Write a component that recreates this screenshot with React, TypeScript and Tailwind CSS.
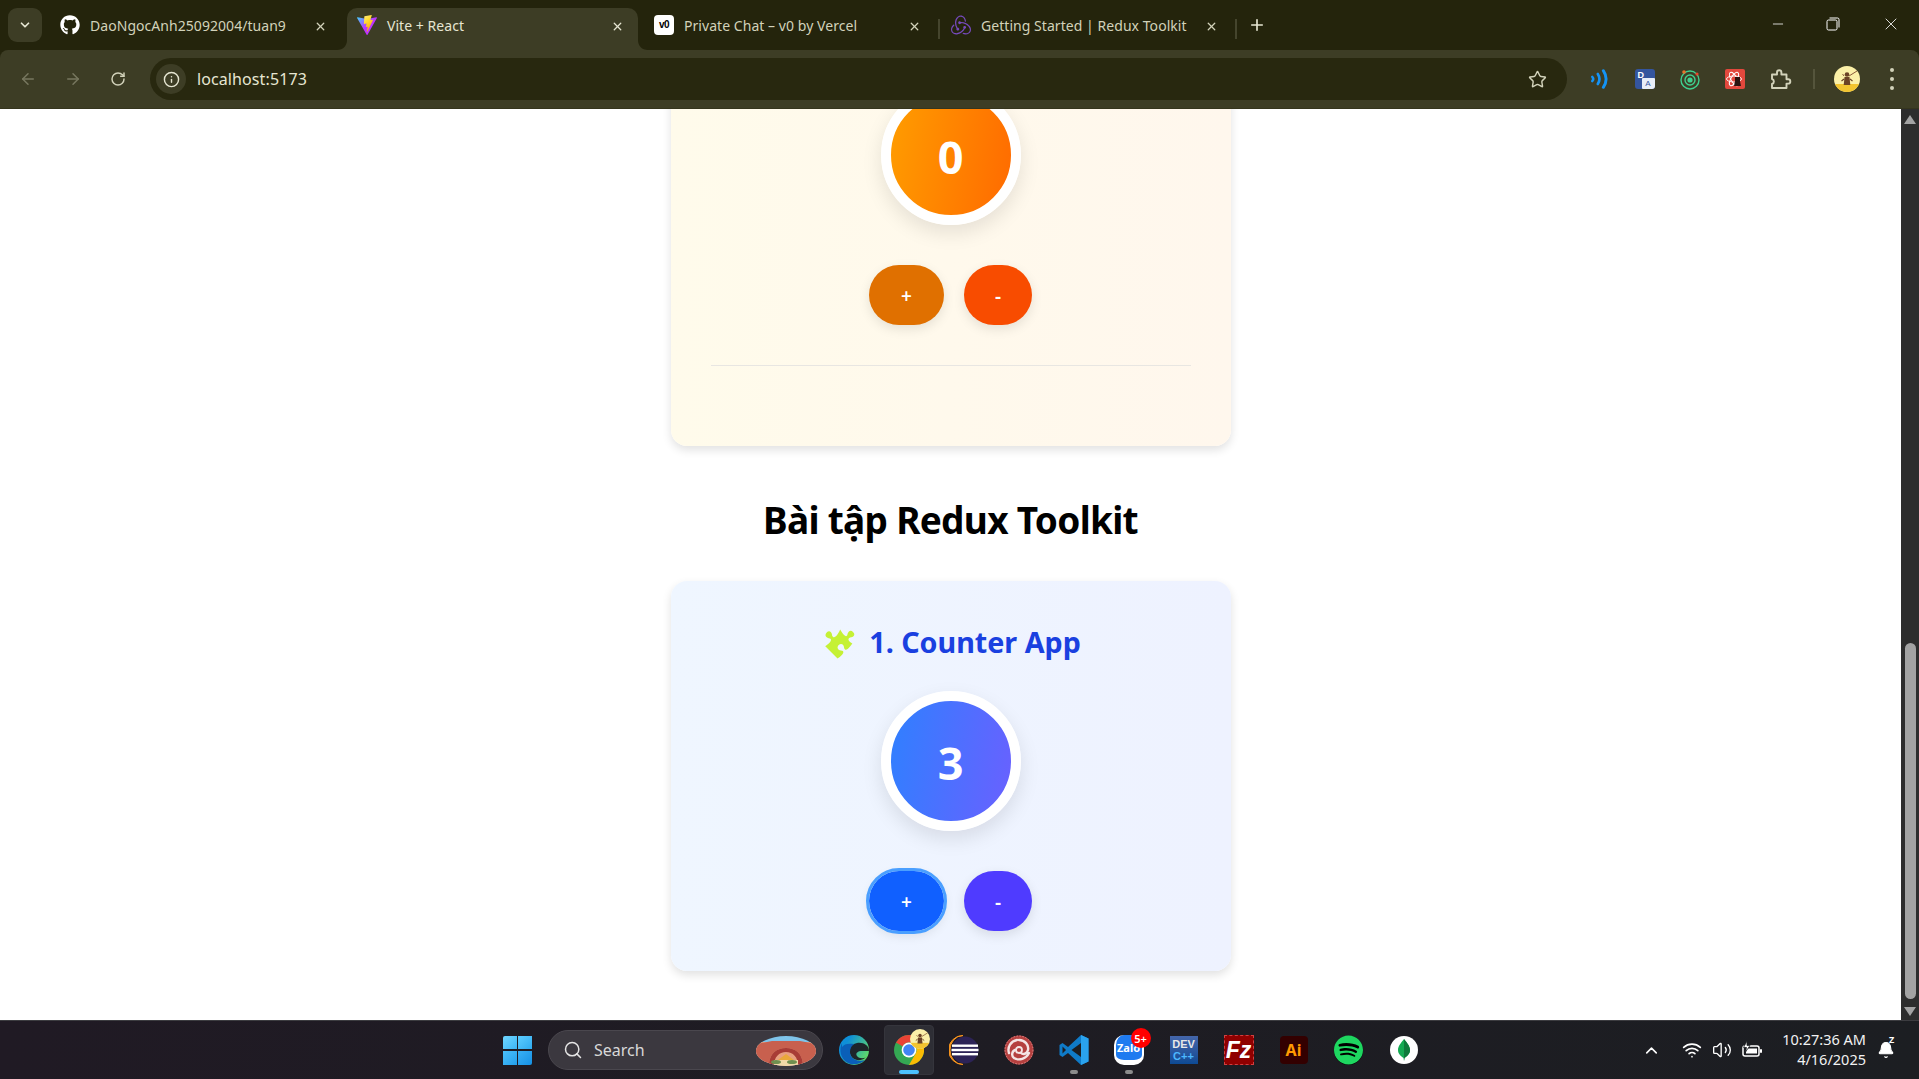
import React from "react";
import { FaGithub, FaPuzzlePiece, FaSpotify } from "react-icons/fa";
import { SiRedux } from "react-icons/si";
import { ArrowLeft, ArrowRight, RotateCw, Info, Star, X, Minus, Plus, ChevronDown, Search, ChevronUp, Wifi, Volume2, Bell } from "lucide-react";

const ui = "font-['Noto_Sans','Open_Sans',sans-serif]";

function ViteIcon() {
  return (
    <svg width="20" height="20" viewBox="0 0 256 257">
      <defs>
        <linearGradient id="va" x1="0" y1="0" x2="1" y2="1"><stop offset="0" stopColor="#41d1ff" /><stop offset="0.5" stopColor="#bd34fe" /></linearGradient>
        <linearGradient id="vb" x1="0" y1="0" x2="0.5" y2="1"><stop offset="0" stopColor="#ffea83" /><stop offset="0.4" stopColor="#ffdd35" /><stop offset="1" stopColor="#ffa800" /></linearGradient>
      </defs>
      <path fill="url(#va)" d="M255.153 37.938 134.897 252.976c-2.483 4.44-8.862 4.466-11.382.048L.875 37.958c-2.746-4.814 1.371-10.646 6.827-9.67l120.385 21.517a6.537 6.537 0 0 0 2.322-.004l117.867-21.483c5.438-.991 9.574 4.796 6.877 9.62Z" />
      <path fill="url(#vb)" d="M185.432.063 96.44 17.501a3.268 3.268 0 0 0-2.634 3.014l-5.474 92.456a3.268 3.268 0 0 0 3.997 3.378l24.777-5.718c2.318-.535 4.413 1.507 3.936 3.838l-7.361 36.047c-.495 2.426 1.782 4.5 4.151 3.78l15.304-4.649c2.372-.72 4.652 1.36 4.15 3.788l-11.698 56.621c-.732 3.542 3.979 5.473 5.943 2.437l1.313-2.028 72.516-144.72c1.215-2.423-.88-5.186-3.54-4.672l-25.505 4.922c-2.396.462-4.435-1.77-3.759-4.114l16.646-57.705c.677-2.35-1.37-4.583-3.769-4.113Z" />
    </svg>
  );
}

function V0Icon() {
  return (
    <div className="w-5 h-5 rounded-[4px] bg-white flex items-center justify-center">
      <span className="text-[10px] leading-none font-black text-black font-['Liberation_Sans',sans-serif] tracking-[-0.5px]">v0</span>
    </div>
  );
}

function Tab({ icon, title, active, divider }: { icon: React.ReactNode; title: string; active?: boolean; divider?: boolean }) {
  return (
    <div className="relative w-[297px] h-[42px] flex items-center shrink-0">
      {active && (
        <>
          <div className="absolute left-0 top-0 bottom-0 right-[6px] bg-[#3d3d25] rounded-t-[10px]" />
          <svg className="absolute left-[-10px] bottom-0" width="10" height="10"><path d="M10 0V10H0C6 10 10 6 10 0Z" fill="#3d3d25" /></svg>
          <svg className="absolute right-[-4px] bottom-0" width="10" height="10"><path d="M0 0V10H10C4 10 0 6 0 0Z" fill="#3d3d25" /></svg>
        </>
      )}
      <div className="relative flex items-center h-full pl-[10px] -top-[4px]">
        <div className="w-5 h-5 flex items-center justify-center relative top-[3px] -mt-[6px]">{icon}</div>
        <span className={`ml-[10px] text-[14px] tracking-[0.05px] whitespace-nowrap ${active ? "text-[#e6e6d2]" : "text-[#d2d2ba]"}`}>{title}</span>
      </div>
      <X className={`absolute left-[264px] top-[12px] ${active ? "text-[#e6e6d2]" : "text-[#d2d2ba]"}`} size={13} strokeWidth={2.4} />
      {divider && <div className="absolute left-[294px] top-[11px] w-[1.5px] h-5 bg-[#45452d]" />}
    </div>
  );
}

function TitleBar() {
  return (
    <div className="h-[50px] bg-[#24240c] flex items-end shrink-0 relative">
      <div className="w-[34px] h-[34px] ml-2 mb-2 rounded-[9px] bg-[#3d3d25] flex items-center justify-center shrink-0">
        <ChevronDown size={14} strokeWidth={3} className="text-[#e6e6d2]" />
      </div>
      <div className="ml-2 flex items-end">
        <Tab icon={<FaGithub size={20} className="text-white" />} title="DaoNgocAnh25092004/tuan9" />
        <Tab active icon={<ViteIcon />} title="Vite + React" />
        <Tab divider icon={<V0Icon />} title="Private Chat – v0 by Vercel" />
        <Tab divider icon={<SiRedux size={20} className="text-[#764abc]" />} title="Getting Started | Redux Toolkit" />
      </div>
      <Plus size={18} strokeWidth={2.2} className="text-[#e6e6d2] ml-[10px] mb-[16px]" />
      <div className="ml-auto flex h-full items-center text-white pr-px pb-[2px]">
        <div className="w-[55px] flex justify-center"><Minus size={16} strokeWidth={1.2} /></div>
        <div className="w-[55px] flex justify-center">
          <svg width="14" height="14" viewBox="0 0 14 14" fill="none" stroke="currentColor" strokeWidth="1"><rect x="1" y="3" width="10" height="10" rx="1.5" /><path d="M3.5 1H11.5A1.5 1.5 0 0 1 13 2.5V10.5" /></svg>
        </div>
        <div className="w-[55px] flex justify-center ml-[3px]"><X size={20} strokeWidth={1} /></div>
      </div>
    </div>
  );
}

function ExtSlot({ children }: { children: React.ReactNode }) {
  return <div className="w-[45px] flex items-center justify-center">{children}</div>;
}

function Avatar({ size, id }: { size: number; id: string }) {
  return (
    <svg width={size} height={size} viewBox="0 0 26 26">
      <defs><clipPath id={id}><circle cx="13" cy="13" r="13" /></clipPath></defs>
      <g clipPath={`url(#${id})`}>
        <rect width="26" height="26" fill="#fbf0a8" />
        <rect y="18" width="26" height="8" fill="#f2c430" />
        <path d="M10.5 11h5l.8 8h-6.6Z" fill="#6b4226" />
        <circle cx="13" cy="8.5" r="2.3" fill="#6b4226" />
        <path d="M8.5 8l1.5 2M15 10l8-5" stroke="#8a5a3a" strokeWidth="1" />
        <path d="M10 13l-2.5 2M16 13l2.5 2" stroke="#6b4226" strokeWidth="1.2" />
      </g>
    </svg>
  );
}

function Toolbar() {
  return (
    <div className="h-[59px] bg-[#24240c] shrink-0">
      <div className="h-full bg-[#3d3d25] rounded-t-[8px] flex items-center pl-[5px] border-b border-[#35351d]">
        <div className="w-[45px] flex justify-center"><ArrowLeft size={18} className="text-[#77775f]" /></div>
        <div className="w-[45px] flex justify-center"><ArrowRight size={18} className="text-[#77775f]" /></div>
        <div className="w-[45px] flex justify-center"><RotateCw size={16} strokeWidth={2.2} className="text-[#d2d2ba]" /></div>
        <div className="ml-[10px] flex-1 h-[42px] rounded-full bg-[#28280f] flex items-center pl-[6px] pr-[20px]">
          <div className="w-[30px] h-[30px] rounded-full bg-[#3d3d25] flex items-center justify-center">
            <Info size={17} className="text-[#e6e6d2]" />
          </div>
          <span className="ml-[11px] text-[16px] tracking-[0.1px] text-[#e6e6d2]">localhost:5173</span>
          <Star size={19} strokeWidth={1.8} className="ml-auto text-[#d2d2ba]" />
        </div>
        <div className="ml-[10px] flex items-center w-[342px] shrink-0">
          <ExtSlot>
            <svg width="20" height="20" viewBox="0 0 18 18" fill="none" stroke="#1493f5" strokeLinecap="round"><path d="M2 7Q4 9 2 11" strokeWidth="2.2" /><path d="M7 4.5Q10 9 7 13.5" strokeWidth="2.4" /><path d="M12 1.5Q17 9 12 16.5" strokeWidth="2.6" /></svg>
          </ExtSlot>
          <ExtSlot>
            <div className="relative w-5 h-5 rounded-[3px] bg-[#34559e] overflow-hidden">
              <span className="absolute left-[3px] top-[1px] text-[9px] font-bold text-white leading-[11px] font-['Liberation_Sans',sans-serif]">D</span>
              <div className="absolute right-0 bottom-0 w-[13px] h-[11px] bg-[#e8eef8] rounded-[1px] flex items-center justify-center">
                <span className="text-[8px] text-[#34559e] leading-none font-['Liberation_Sans',sans-serif]">A</span>
              </div>
            </div>
          </ExtSlot>
          <ExtSlot>
            <svg width="22" height="22" viewBox="0 0 22 22" fill="none"><circle cx="11" cy="12" r="9" stroke="#3fd08f" strokeWidth="1.4" /><circle cx="11" cy="12" r="5" stroke="#3fd08f" strokeWidth="1.4" /><circle cx="11" cy="12" r="2.6" fill="#3fd08f" /><circle cx="5" cy="4" r="1.8" fill="#e8702a" /><circle cx="18" cy="6" r="1.6" fill="#e8452a" /></svg>
          </ExtSlot>
          <ExtSlot>
            <svg width="20" height="20" viewBox="0 0 20 20" fill="none"><rect width="20" height="20" rx="2" fill="#e2483d" /><g stroke="#fff" strokeWidth="0.9"><ellipse cx="9" cy="10" rx="7.5" ry="3" /><ellipse cx="9" cy="10" rx="7.5" ry="3" transform="rotate(60 9 10)" /><ellipse cx="9" cy="10" rx="7.5" ry="3" transform="rotate(120 9 10)" /></g><path d="M10 8h5v4l1 5h-7l1-5Z" fill="#2a1410" /></svg>
          </ExtSlot>
          <ExtSlot>
            <svg className="relative left-px" width="22" height="22" viewBox="0 0 22 22" fill="none" stroke="#d2d2ba" strokeWidth="1.9" strokeLinejoin="round"><path d="M2 6.5h5V4.5a2.2 2.2 0 0 1 4.4 0v2h5.1v4.7h1.6a2.2 2.2 0 0 1 0 4.4h-1.6V20H2v-4a2.6 2.6 0 0 0 0-5Z" /></svg>
          </ExtSlot>
          <div className="ml-[11px] w-[2px] h-5 bg-[#55553c]" />
          <div className="ml-[19px]"><Avatar size={26} id="av1" /></div>
          <div className="ml-[30px] flex flex-col gap-[5px]">
            <div className="w-[4px] h-[4px] rounded-full bg-[#d2d2ba]" />
            <div className="w-[4px] h-[4px] rounded-full bg-[#d2d2ba]" />
            <div className="w-[4px] h-[4px] rounded-full bg-[#d2d2ba]" />
          </div>
        </div>
      </div>
    </div>
  );
}

function Counter({ value, ring, plus, minus, ringFocus }: { value: number; ring: string; plus: string; minus: string; ringFocus?: boolean }) {
  return (
    <>
      <div className={`w-[140px] h-[140px] rounded-full border-[10px] border-white shadow-[0_8px_20px_rgba(0,0,0,0.1)] flex items-center justify-center text-white text-[45px] font-bold leading-none ${ui} ${ring}`}>
        <span className="relative top-px">{value}</span>
      </div>
      <div className="mt-10 flex gap-5">
        <div className={`w-[75px] h-[60px] rounded-[30px] text-white text-[19px] font-semibold flex items-center justify-center shadow-[0_4px_12px_rgba(0,0,0,0.1)] ${plus} ${ringFocus ? "outline-[3px] outline-[#4a9fff]" : ""}`}><span className="relative top-px">+</span></div>
        <div className={`w-[68px] h-[60px] rounded-[30px] text-white text-[19px] font-semibold flex items-center justify-center shadow-[0_4px_12px_rgba(0,0,0,0.1)] ${minus}`}><span className="relative top-px">-</span></div>
      </div>
    </>
  );
}

function Page() {
  return (
    <div className="flex-1 min-h-0 flex overflow-hidden bg-white">
      <div className={`flex-1 flex flex-col items-center ${ui}`}>
        <div className="w-[560px] -mt-[134px] pt-[110px] px-10 pb-0 rounded-2xl shadow-[0_4px_10px_rgba(0,0,0,0.12)] flex flex-col items-center bg-linear-to-r from-[#fffbeb] to-[#fff7ed] shrink-0">
          <Counter value={0} ring="bg-linear-[100deg] from-[#ff9d00] to-[#ff6a00]" plus="bg-[#e07000]" minus="bg-[#f84c00]" />
          <div className="mt-10 mb-20 w-full h-px bg-[#e8e6e2]" />
        </div>
        <h2 className="mt-[52px] mb-[40px] text-[37px] leading-[43px] tracking-[-0.7px] font-bold text-black whitespace-nowrap">Bài tập Redux Toolkit</h2>
        <div className="w-[560px] pt-10 pb-10 px-10 rounded-2xl shadow-[0_4px_10px_rgba(0,0,0,0.12)] flex flex-col items-center bg-linear-to-r from-[#eff6ff] to-[#eef2ff] shrink-0">
          <div className="h-[44px] flex items-center gap-[15px] mb-[26px] relative left-[2px] -top-px">
            <FaPuzzlePiece size={30} className="text-[#c5f135] rotate-[-45deg] relative -top-[3px]" />
            <span className="text-[28.7px] leading-none font-bold text-[#1a40e0] whitespace-nowrap">1. Counter App</span>
          </div>
          <Counter value={3} ring="bg-linear-[100deg] from-[#2f80ff] to-[#6a60ff]" plus="bg-[#1060ff]" minus="bg-[#4f3bff]" ringFocus />
        </div>
      </div>
      <div className="w-[18px] bg-[#2d2d2d] flex flex-col items-center shrink-0 relative">
        <svg className="mt-[6px]" width="14" height="10" viewBox="0 0 14 10"><path d="M7 0L13 9H1Z" fill="#a3a3a3" /></svg>
        <div className="absolute top-[534px] left-[4px] w-[11px] h-[356px] rounded-full bg-[#a3a3a3]" />
        <svg className="mt-auto mb-[4px]" width="14" height="10" viewBox="0 0 14 10"><path d="M7 10L13 1H1Z" fill="#a3a3a3" /></svg>
      </div>
    </div>
  );
}

function Slot({ children, active, dot }: { children: React.ReactNode; active?: boolean; dot?: boolean }) {
  return (
    <div className="relative w-[55px] h-[50px] flex items-center justify-center shrink-0">
      {active && <div className="absolute left-[3px] right-[2px] top-0 bottom-0 rounded-[4px] bg-[#2e2e35] border border-[#35353c]" />}
      <div className="relative">{children}</div>
      {active && <div className="absolute bottom-[1px] left-[18px] w-5 h-1 rounded-full bg-[#4cc2ff]" />}
      {dot && <div className="absolute bottom-[1px] left-[24px] w-2 h-1 rounded-full bg-[#8c8c8c]" />}
    </div>
  );
}

function Taskbar() {
  return (
    <div className={`h-[59px] shrink-0 bg-linear-to-r from-[#201a24] to-[#1c1e22] border-t border-[#3c3c40] flex items-center relative ${ui}`}>
      <div className="ml-[503px] w-[29px] h-[29px] grid grid-cols-2 gap-[1.5px] shrink-0">
        <div className="bg-linear-to-br from-[#6fd6ff] to-[#3ab5f5] rounded-tl-[2px]" />
        <div className="bg-linear-to-br from-[#5ccdff] to-[#2eabf0]" />
        <div className="bg-linear-to-br from-[#4ac0fb] to-[#22a0ec]" />
        <div className="bg-linear-to-br from-[#38b0f5] to-[#1490e4] rounded-br-[2px]" />
      </div>
      <div className="ml-[16px] w-[275px] h-10 rounded-full bg-[#3b383f] border border-[#4a474e] flex items-center pl-[14px] shrink-0 relative">
        <Search size={20} strokeWidth={1.8} className="text-[#e4e4e4]" />
        <span className="ml-[11px] text-[16px] text-[#d8d8d8]">Search</span>
        <svg className="absolute right-[6px] top-[5px]" width="60" height="30" viewBox="0 0 60 30">
          <defs><clipPath id="sc"><ellipse cx="30" cy="15" rx="30" ry="15" /></clipPath></defs>
          <g clipPath="url(#sc)">
            <rect width="60" height="30" fill="#7fc4ea" />
            <rect y="6" width="60" height="24" fill="#e8a080" />
            <path d="M0 8L16 5 44 5 60 8V30H47C47 18 40 12 30 12S13 18 13 30H0Z" fill="#c8604e" />
            <path d="M13 30C13 18 20 12 30 12S47 18 47 30H42C42 21 37 16 30 16S18 21 18 30Z" fill="#a83c36" />
            <path d="M22 24L30 18 38 24Z" fill="#eaa83a" />
            <rect x="18" y="24" width="24" height="6" fill="#f0d8a8" />
            <ellipse cx="20" cy="26" rx="5" ry="2" fill="#6f8f50" />
            <ellipse cx="36" cy="26" rx="5" ry="2" fill="#6f8f50" />
          </g>
        </svg>
      </div>
      <div className="ml-[3px] flex items-center shrink-0">
        <Slot>
          <svg width="30" height="30" viewBox="0 0 30 30">
            <defs><linearGradient id="eg" x1="0" y1="0" x2="1" y2="0.6"><stop offset="0.3" stopColor="#0e8fd8" /><stop offset="1" stopColor="#5fd86a" /></linearGradient></defs>
            <circle cx="15" cy="15" r="15" fill="url(#eg)" />
            <path d="M30 16C30 10 24 7 18 8C11 9 9 16 12 21C15 26 22 27 29 21C26 24 20 24 18 21C16 18 19 16 23 16Z" fill="#1c1e24" opacity="0.95" />
            <path d="M3 8C0 14 1 24 9 28C13 30 21 30 26 25C21 27 14 25 12 21C10 17 11 12 15 9C9 8 5 9 3 12Z" fill="#0a5fb8" />
          </svg>
        </Slot>
        <Slot active>
          <svg width="30" height="30" viewBox="0 0 30 30">
            <circle cx="15" cy="15" r="15" fill="#34a853" />
            <path d="M15 0A15 15 0 0 1 28 7.5H15A7.5 7.5 0 0 0 8.5 11.3L2 7.5A15 15 0 0 1 15 0Z" fill="#ea4335" />
            <path d="M28 7.5A15 15 0 0 1 15 30L21.5 18.8A7.5 7.5 0 0 0 20.3 9.7L28 7.5Z" fill="#fbbc04" />
            <circle cx="15" cy="15" r="7.4" fill="#fff" />
            <circle cx="15" cy="15" r="5.8" fill="#4285f4" />
          </svg>
          <div className="absolute -top-[6px] -right-[6px]"><Avatar size={20} id="av2" /></div>
        </Slot>
        <Slot>
          <svg width="30" height="30" viewBox="0 0 30 30">
            <circle cx="16" cy="15" r="13.5" fill="#2c2356" />
            <path d="M14 0.5A14.5 14.5 0 0 0 14 29.5A13 14.5 0 0 1 14 0.5Z" fill="#f7941e" stroke="#f7941e" />
            <rect x="3" y="9.5" width="26" height="2.4" fill="#fff" /><rect x="2.5" y="13.8" width="27" height="2.4" fill="#fff" /><rect x="3" y="18" width="26" height="2.4" fill="#fff" />
          </svg>
        </Slot>
        <Slot>
          <svg width="30" height="30" viewBox="0 0 30 30" fill="none">
            <circle cx="15" cy="15" r="14.5" fill="#b5403f" />
            <circle cx="15" cy="15" r="14" stroke="#d88" strokeWidth="1" strokeDasharray="1.5 1.5" />
            <path d="M15 5C21 5 25 10 24 15M24 15C23 19 19 20 17 18M25 18C22 24 15 26 10 23M10 23C7 21 8 16 11 15M5 18C3 12 7 6 13 5" stroke="#f4e4e4" strokeWidth="2.4" strokeLinecap="round" />
            <circle cx="15" cy="15" r="3" stroke="#f4e4e4" strokeWidth="1.8" />
          </svg>
        </Slot>
        <Slot dot>
          <svg width="30" height="30" viewBox="0 0 30 30">
            <path d="M22 0L29.5 3.5V26.5L22 30L9 18 3.5 22 0.5 20V10L3.5 8 9 12Z" fill="#0f7bc8" />
            <path d="M22 0L29.5 3.5V26.5L22 30Z" fill="#2aa3ee" />
            <path d="M22 8V22L12.5 15Z" fill="#1c1e22" />
            <path d="M3.5 11.5L7 15 3.5 18.5Z" fill="#1c1e22" />
          </svg>
        </Slot>
        <Slot dot>
          <div className="w-[30px] h-[30px] rounded-[10px] bg-[#1f7bf0] border-x-[2px] border-b-[5px] border-white flex items-center justify-center">
            <span className="text-[11px] font-bold text-white leading-none">Zalo</span>
          </div>
          <div className="absolute -top-[7px] -right-[7px] w-5 h-5 rounded-full bg-[#f00] flex items-center justify-center text-white text-[11px] font-semibold leading-none">5+</div>
        </Slot>
        <Slot>
          <div className="w-7 h-7 bg-linear-to-b from-[#4466aa] to-[#0c4a94] flex flex-col items-center justify-center font-['Liberation_Sans',sans-serif] font-bold leading-none">
            <span className="text-[11px] text-[#e8e8e8]">DEV</span>
            <span className="text-[11px] text-[#4db8ff] mt-[1px]">C++</span>
          </div>
        </Slot>
        <Slot>
          <div className="w-[30px] h-[30px] bg-[#8f0000] border border-dashed border-[#d04040] flex items-center justify-center">
            <span className="text-[23px] italic font-bold text-white leading-none font-['Liberation_Sans',sans-serif]">Fz</span>
          </div>
        </Slot>
        <Slot>
          <div className="w-7 h-7 rounded-[4px] bg-[#330000] flex items-center justify-center">
            <span className="text-[16px] font-bold text-[#ff9a00] leading-none">Ai</span>
          </div>
        </Slot>
        <Slot>
          <div className="w-[29px] h-[29px] flex items-center justify-center rounded-full bg-black">
            <FaSpotify size={30} className="text-[#1ed760]" />
          </div>
        </Slot>
        <Slot>
          <div className="w-7 h-7 rounded-full bg-white flex items-center justify-center">
            <svg width="12" height="22" viewBox="0 0 12 22"><path d="M6 0C9 4 12 7 12 11C12 15 9 17 6.5 19L6 22L5.5 19C3 17 0 15 0 11C0 7 3 4 6 0Z" fill="#13aa52" /><path d="M6 0C9 4 12 7 12 11C12 15 9 17 6.5 19L6 22Z" fill="#0d7a3b" /></svg>
          </div>
        </Slot>
      </div>
      <div className="ml-[211px] flex items-center text-white shrink-0">
        <ChevronUp size={19} strokeWidth={2} />
        <Wifi size={20} strokeWidth={2} className="ml-[21px]" />
        <Volume2 size={20} strokeWidth={1.6} className="ml-[10px]" />
        <svg className="ml-[9px]" width="22" height="20" viewBox="0 0 22 20" fill="none">
          <rect x="2" y="6" width="16" height="10" rx="2" stroke="#fff" strokeWidth="1.5" />
          <rect x="5" y="8.5" width="11" height="5" fill="#fff" />
          <rect x="19" y="9" width="2" height="4" rx="1" fill="#fff" />
          <path d="M6 1L2.5 7.5H5.5L4.5 12L9 5.5H6Z" fill="#fff" stroke="#1c1e22" strokeWidth="0.8" />
        </svg>
      </div>
      <div className="ml-auto mr-[53px] text-[14.5px] leading-[20px] text-right text-[#f2f2f2] whitespace-nowrap relative top-[-1px]">
        <div>10:27:36 AM</div>
        <div>4/16/2025</div>
      </div>
      <div className="absolute left-[1877px] top-[20px] text-white">
        <Bell size={18} fill="currentColor" strokeWidth={1.5} />
        <span className="absolute -top-[6px] left-[12px] text-[9px] font-bold leading-none">Z</span>
      </div>
    </div>
  );
}

export default function App() {
  return (
    <div className={`w-[1919px] h-[1079px] overflow-hidden flex flex-col ${ui}`}>
      <TitleBar />
      <Toolbar />
      <Page />
      <Taskbar />
    </div>
  );
}
